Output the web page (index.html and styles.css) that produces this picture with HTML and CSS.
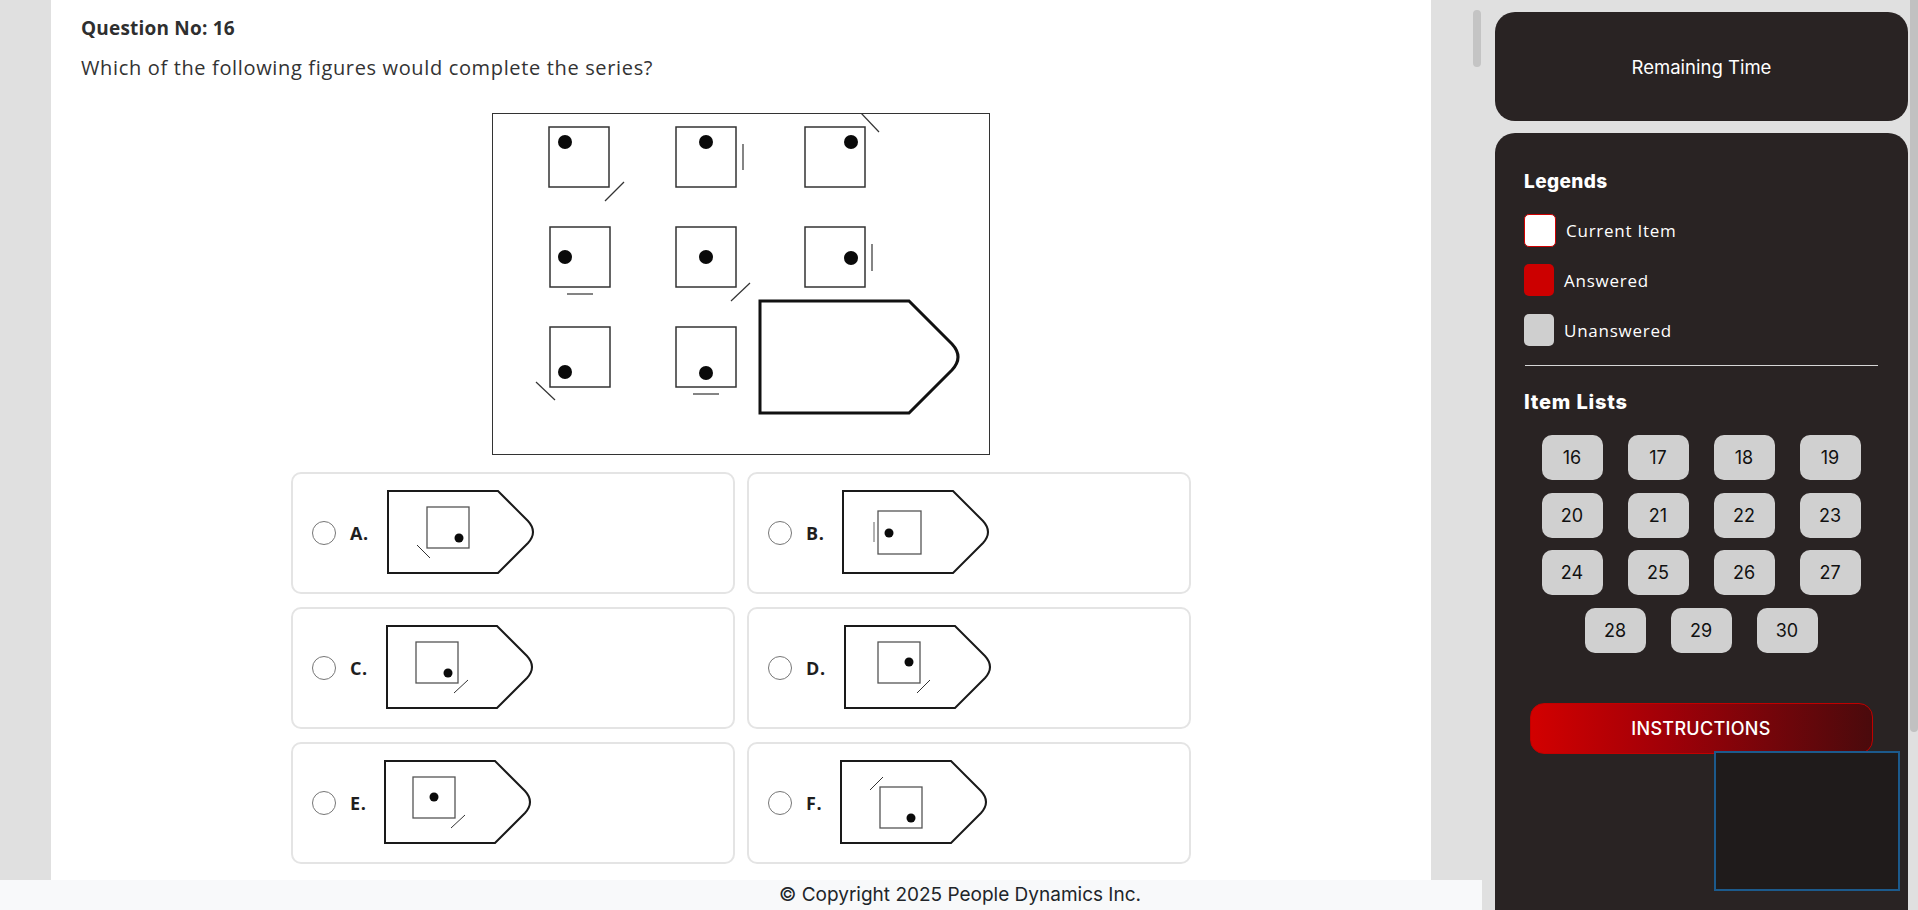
FILE: index.html
```html
<!DOCTYPE html>
<html lang="en">
<head>
<meta charset="utf-8">
<title>Question 16</title>
<link rel="stylesheet" href="styles.css">
</head>
<body>
<div class="app">
  <div class="main-col">
    <div class="main-area">
      <div class="gutter"></div>
      <main class="panel">
        <h1 class="q-no">Question No: 16</h1>
        <p class="q-text">Which of the following figures would complete the series?</p>
        <svg class="puzzle" width="498" height="342" viewBox="0 0 498 342">
          <rect x="0.5" y="0.5" width="497" height="341" fill="#fff" stroke="#333" stroke-width="1"/>
          <g fill="none" stroke="#333" stroke-width="1.5">
            <rect x="57" y="14" width="60" height="60"/>
            <rect x="184" y="14" width="60" height="60"/>
            <rect x="313" y="14" width="60" height="60"/>
            <rect x="58" y="114" width="60" height="60"/>
            <rect x="184" y="114" width="60" height="60"/>
            <rect x="313" y="114" width="60" height="60"/>
            <rect x="58" y="214" width="60" height="60"/>
            <rect x="184" y="214" width="60" height="60"/>
          </g>
          <g fill="#0a0a0a">
            <circle cx="73" cy="29" r="7"/>
            <circle cx="214" cy="29" r="7"/>
            <circle cx="359" cy="29" r="7"/>
            <circle cx="73" cy="144" r="7"/>
            <circle cx="214" cy="144" r="7"/>
            <circle cx="359" cy="145" r="7"/>
            <circle cx="73" cy="259" r="7"/>
            <circle cx="214" cy="260" r="7"/>
          </g>
          <g stroke="#333" stroke-width="1.2">
            <line x1="113" y1="88" x2="132" y2="69"/>
            <line x1="251" y1="31" x2="251" y2="57"/>
            <line x1="369" y1="0" x2="387" y2="19"/>
            <line x1="75" y1="181" x2="101" y2="181"/>
            <line x1="239" y1="188" x2="258" y2="170"/>
            <line x1="380" y1="131" x2="380" y2="158"/>
            <line x1="44" y1="269" x2="63" y2="287"/>
            <line x1="201" y1="281" x2="227" y2="281"/>
          </g>
          <path d="M268,188 H417 L460,231 Q472,244 460,257 L417,300 H268 Z" fill="none" stroke="#111" stroke-width="3" stroke-linejoin="miter"/>
        </svg>

        <div class="options">
          <label class="option">
            <span class="radio"></span>
            <span class="opt-label">A.</span>
            <svg class="fig" width="150" height="86" viewBox="0 0 150 86">
              <path class="tag" d="M1,1 H111 L141,31 Q151,42 141,53 L111,83 H1 Z"/>
              <rect class="sq" x="40" y="17" width="42" height="41"/>
              <circle class="dot" cx="72" cy="48" r="4.5"/>
              <line class="ln" x1="30" y1="55" x2="43" y2="68"/>
            </svg>
          </label>
          <label class="option">
            <span class="radio"></span>
            <span class="opt-label">B.</span>
            <svg class="fig" width="150" height="86" viewBox="0 0 150 86">
              <path class="tag" d="M1,1 H111 L141,31 Q151,42 141,53 L111,83 H1 Z"/>
              <rect class="sq" x="36" y="21" width="43" height="43"/>
              <circle class="dot" cx="47" cy="43" r="4.5"/>
              <line class="ln light" x1="32" y1="32" x2="32" y2="52"/>
            </svg>
          </label>
          <label class="option">
            <span class="radio"></span>
            <span class="opt-label">C.</span>
            <svg class="fig" width="150" height="86" viewBox="0 0 150 86">
              <path class="tag" d="M1,1 H111 L141,31 Q151,42 141,53 L111,83 H1 Z"/>
              <rect class="sq" x="30" y="17" width="42" height="41"/>
              <circle class="dot" cx="62" cy="48" r="4.5"/>
              <line class="ln" x1="68" y1="68" x2="82" y2="55"/>
            </svg>
          </label>
          <label class="option">
            <span class="radio"></span>
            <span class="opt-label">D.</span>
            <svg class="fig" width="150" height="86" viewBox="0 0 150 86">
              <path class="tag" d="M1,1 H111 L141,31 Q151,42 141,53 L111,83 H1 Z"/>
              <rect class="sq" x="34" y="17" width="42" height="41"/>
              <circle class="dot" cx="65" cy="37" r="4.5"/>
              <line class="ln" x1="73" y1="68" x2="86" y2="55"/>
            </svg>
          </label>
          <label class="option">
            <span class="radio"></span>
            <span class="opt-label">E.</span>
            <svg class="fig" width="150" height="86" viewBox="0 0 150 86">
              <path class="tag" d="M1,1 H111 L141,31 Q151,42 141,53 L111,83 H1 Z"/>
              <rect class="sq" x="29" y="17" width="42" height="41"/>
              <circle class="dot" cx="50" cy="37" r="4.5"/>
              <line class="ln" x1="67" y1="68" x2="81" y2="55"/>
            </svg>
          </label>
          <label class="option">
            <span class="radio"></span>
            <span class="opt-label">F.</span>
            <svg class="fig" width="150" height="86" viewBox="0 0 150 86">
              <path class="tag" d="M1,1 H111 L141,31 Q151,42 141,53 L111,83 H1 Z"/>
              <rect class="sq" x="40" y="27" width="42" height="41"/>
              <circle class="dot" cx="71" cy="58" r="4.5"/>
              <line class="ln" x1="30" y1="30" x2="43" y2="17"/>
            </svg>
          </label>
        </div>
      </main>
      <div class="scroll-gap"></div>
      <div class="thumb-main"></div>
    </div>
    <footer class="footer">© Copyright 2025 People Dynamics Inc.</footer>
  </div>

  <aside class="sidebar">
    <section class="card timer">Remaining Time</section>
    <section class="card nav">
      <h2 class="side-title">Legends</h2>
      <ul class="legend">
        <li class="legend-row"><span class="swatch current"></span>Current Item</li>
        <li class="legend-row"><span class="swatch answered"></span>Answered</li>
        <li class="legend-row"><span class="swatch unanswered"></span>Unanswered</li>
      </ul>
      <hr class="divider">
      <h2 class="side-title items-title">Item Lists</h2>
      <div class="items">
        <button class="item">16</button>
        <button class="item">17</button>
        <button class="item">18</button>
        <button class="item">19</button>
        <button class="item">20</button>
        <button class="item">21</button>
        <button class="item">22</button>
        <button class="item">23</button>
        <button class="item">24</button>
        <button class="item">25</button>
        <button class="item">26</button>
        <button class="item">27</button>
        <button class="item">28</button>
        <button class="item">29</button>
        <button class="item">30</button>
      </div>
      <button class="instructions">INSTRUCTIONS</button>
    </section>
  </aside>
  <div class="side-scroll"><div class="side-thumb"></div></div>
</div>
<div class="webcam"></div>
</body>
</html>
```

FILE: styles.css
```css
* { box-sizing: border-box; }

html, body {
  margin: 0;
  padding: 0;
}

body {
  width: 1918px;
  height: 910px;
  overflow: hidden;
  background: #e0e0e0;
  font-family: "Open Sans", "Liberation Sans", sans-serif;
  color: #333;
}

.app {
  display: flex;
  height: 910px;
}

.main-col {
  width: 1482px;
  display: flex;
  flex-direction: column;
}

.main-area {
  height: 880px;
  display: flex;
}

.gutter { width: 51px; flex: none; }

.panel {
  width: 1380px;
  flex: none;
  background: #fff;
  padding: 15px 30px 0;
  overflow: hidden;
}

.q-no {
  margin: 0;
  font-size: 19px;
  line-height: 26px;
  font-weight: 700;
  letter-spacing: 0.2px;
  color: #2f2f2f;
}

.q-text {
  margin: 14px 0 0;
  font-size: 20px;
  line-height: 26px;
  letter-spacing: 0.65px;
  color: #333;
}

.puzzle {
  display: block;
  margin: 32px auto 0;
}

.options {
  width: 900px;
  margin: 17px auto 0;
  display: grid;
  grid-template-columns: 444px 444px;
  column-gap: 12px;
  row-gap: 13px;
}

.option {
  height: 122px;
  border: 2px solid #e4e4e4;
  border-radius: 10px;
  display: flex;
  align-items: center;
  padding-left: 19px;
}

.radio {
  width: 24px;
  height: 24px;
  border: 1.5px solid #767676;
  border-radius: 50%;
  background: #fff;
  flex: none;
}

.opt-label {
  margin-left: 14px;
  font-size: 18px;
  font-weight: 700;
  letter-spacing: 0.6px;
  color: #1e1e1e;
}

.fig {
  display: block;
  margin-left: 18px;
}

.fig .tag { fill: #fff; stroke: #1a1a1a; stroke-width: 2; }
.fig .sq { fill: none; stroke: #555; stroke-width: 1.3; }
.fig .dot { fill: #0a0a0a; }
.fig .ln { stroke: #333; stroke-width: 1; }
.fig .ln.light { stroke: #999; stroke-width: 1.5; }

.scroll-gap { width: 42px; flex: none; }

.thumb-main {
  width: 8px;
  height: 57px;
  margin-top: 10px;
  background: #c4c4c4;
  border-radius: 4px;
  flex: none;
}

.footer {
  height: 30px;
  background: #f8f9fa;
  font-family: Inter, "Liberation Sans", sans-serif;
  font-size: 19px;
  line-height: 30px;
  color: #212529;
  text-align: center;
  padding-left: 438px;
  white-space: nowrap;
}

.sidebar {
  width: 413px;
  margin-left: 13px;
  padding-top: 12px;
  display: flex;
  flex-direction: column;
  gap: 12px;
  flex: none;
}

.card {
  background: #292323;
  border-radius: 20px;
  color: #fff;
}

.timer {
  height: 109px;
  display: flex;
  align-items: center;
  justify-content: center;
  font-family: Inter, "Liberation Sans", sans-serif;
  font-size: 18.5px;
}

.nav {
  flex: 1;
  border-radius: 20px 20px 0 0;
  padding: 37px 30px 0 29px;
}

.side-title {
  margin: 0;
  font-family: Inter, "Liberation Sans", sans-serif;
  font-size: 19px;
  line-height: 24px;
  font-weight: 800;
  letter-spacing: 0.4px;
}

.legend {
  list-style: none;
  margin: 20px 0 0;
  padding: 0;
  display: flex;
  flex-direction: column;
  gap: 18px;
}

.legend-row {
  display: flex;
  align-items: center;
  height: 32px;
  font-size: 17px;
  letter-spacing: 0.75px;
}

.swatch {
  width: 30px;
  height: 32px;
  border-radius: 5px;
  margin-right: 10px;
  flex: none;
}

.swatch.current {
  width: 32px;
  height: 33px;
  background: #fff;
  border: 1px solid #d00000;
}

.swatch.answered { background: #cc0000; }
.swatch.unanswered { background: #cfcfcf; }

.divider {
  margin: 19px 0 0 1px;
  border: 0;
  border-top: 1px solid #d6d6d6;
}

.items-title {
  margin-top: 24px;
  font-size: 20px;
  letter-spacing: 0.8px;
}

.items {
  margin-top: 21px;
  display: flex;
  flex-wrap: wrap;
  justify-content: center;
  column-gap: 25px;
  row-gap: 12.5px;
}

.item {
  width: 61px;
  height: 45px;
  border: 0;
  border-radius: 10px;
  background: #d0d0d0;
  color: #111;
  font-family: Inter, "Liberation Sans", sans-serif;
  font-size: 18px;
  padding: 0;
}

.instructions {
  display: block;
  width: 343px;
  height: 51px;
  margin: 50px auto 0;
  border: 1px solid #c00000;
  border-radius: 14px;
  background: linear-gradient(90deg, #d20000 0%, #a00008 40%, #4a0a0c 100%);
  color: #fff;
  font-family: Inter, "Liberation Sans", sans-serif;
  font-size: 18px;
  font-weight: 500;
  letter-spacing: 0.3px;
}

.side-scroll {
  width: 10px;
  padding-left: 2px;
  flex: none;
}

.side-thumb {
  width: 8px;
  height: 732px;
  background: #c1c1c1;
  border-radius: 0 0 4px 4px;
}

.webcam {
  position: absolute;
  left: 1714px;
  top: 751px;
  width: 186px;
  height: 140px;
  background: #1f1b1b;
  border: 2px solid #1c5a8c;
}
```
